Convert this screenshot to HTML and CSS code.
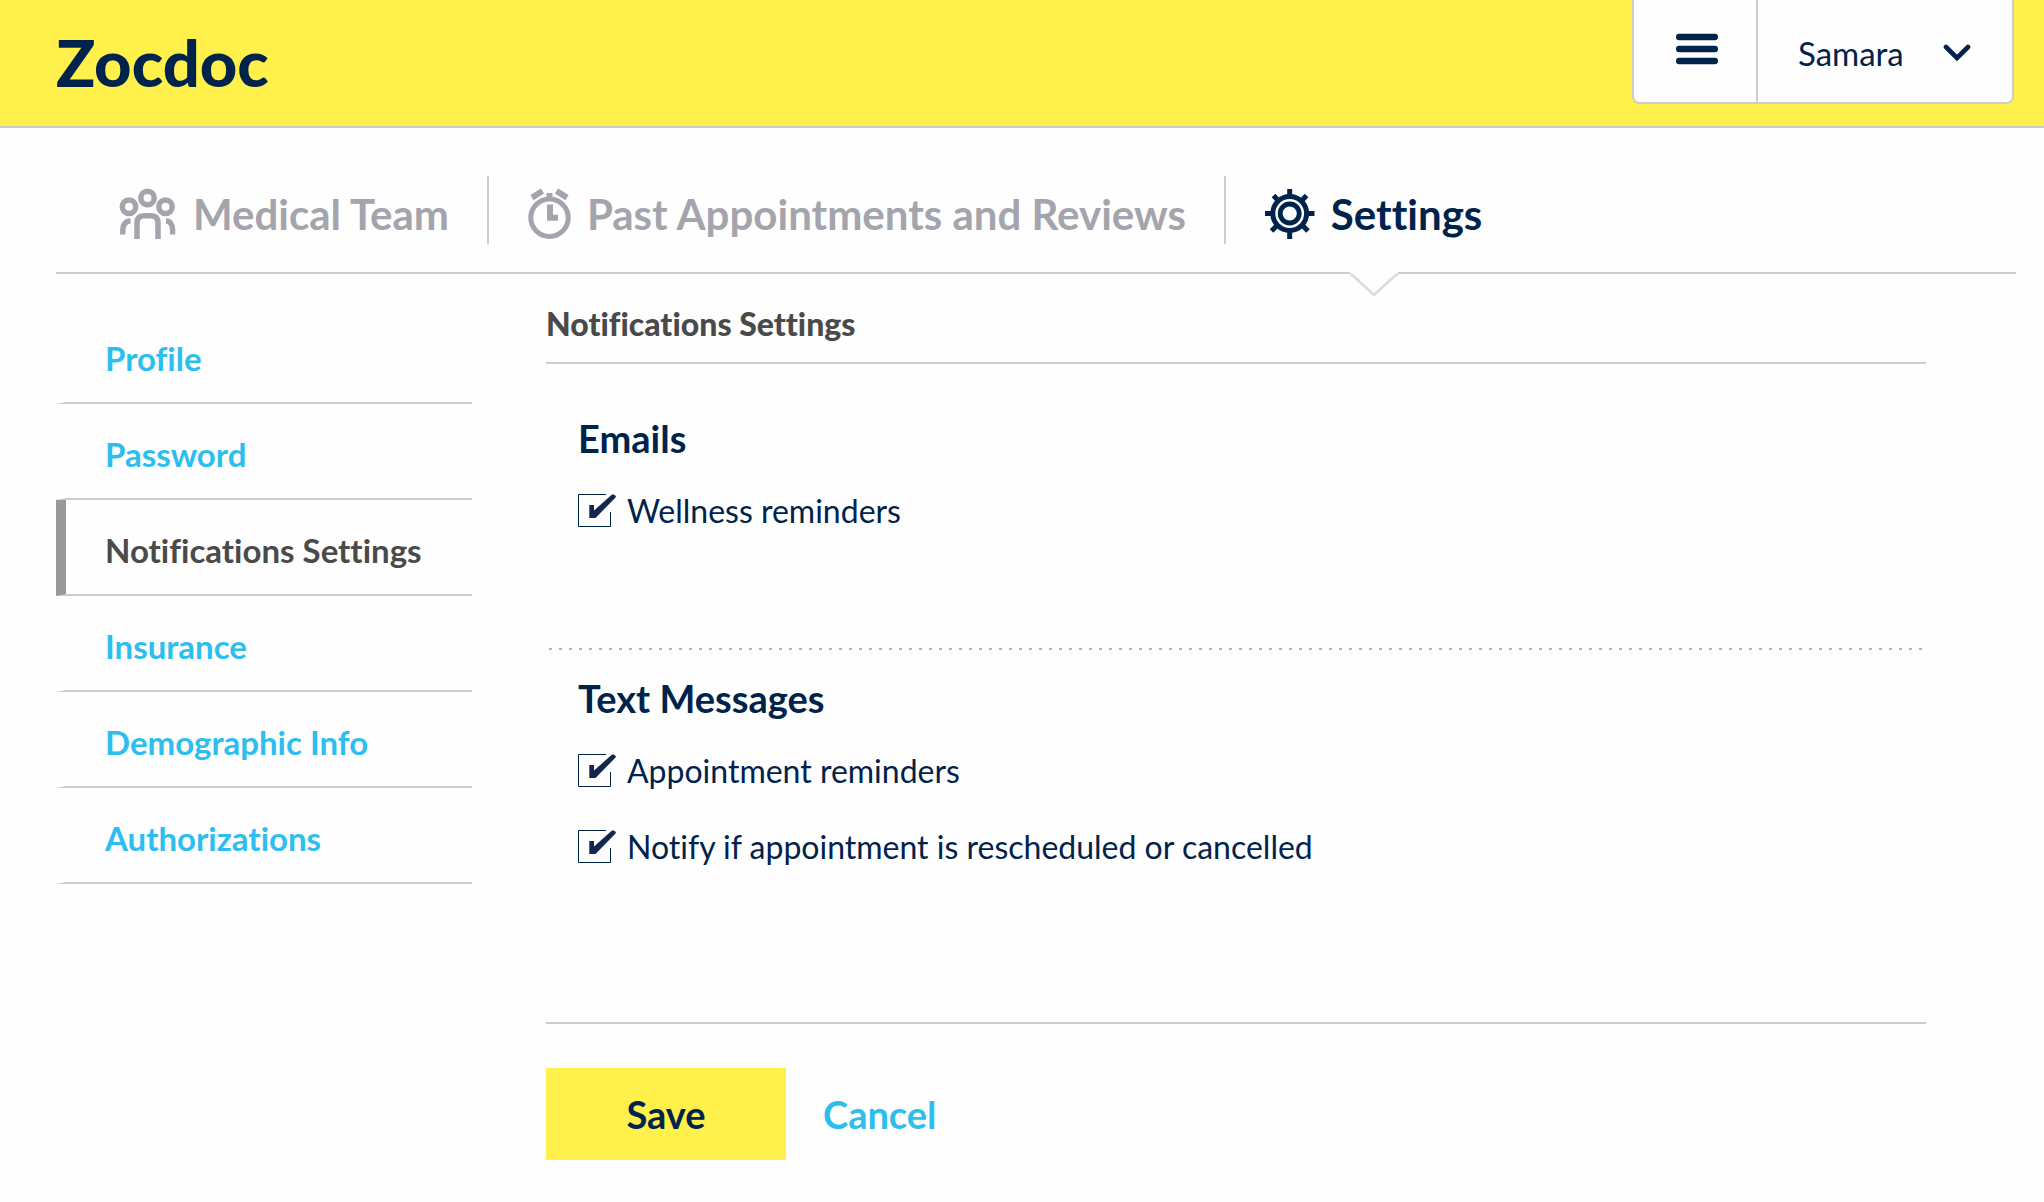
FILE: index.html
```html
<!DOCTYPE html>
<html lang="en">
<head>
<meta charset="utf-8">
<meta name="viewport" content="width=device-width, initial-scale=1">
<title>Notifications Settings - Zocdoc</title>
<link rel="stylesheet" href="styles.css">
</head>
<body>
<header class="site-header">
  <a class="logo" href="#">Zocdoc</a>
  <div class="account">
    <button class="account-button menu-button" type="button" aria-label="Menu">
      <svg width="42" height="32" viewBox="0 0 42 32" aria-hidden="true"><path d="M3.200 4h35.600M3.200 16h35.600M3.200 28h35.600" stroke="currentColor" stroke-width="6.400" stroke-linecap="round"/></svg>
    </button>
    <button class="account-button user-button" type="button">
      <span>Samara</span>
      <svg width="28" height="18" viewBox="0 0 28 18" fill="none" aria-hidden="true"><path d="M3 3l11 11L25 3" stroke="currentColor" stroke-width="4.600" stroke-linecap="round"/></svg>
    </button>
  </div>
</header>
<nav class="tabs" aria-label="Account">
  <ul class="tab-list">
    <li class="tab">
      <a class="tab-link" href="#">
        <svg class="icon-team" width="58" height="52" viewBox="0 0 58 52" fill="none" stroke="currentColor" stroke-width="5.500" aria-hidden="true"><circle cx="28.500" cy="10" r="6.700"/><circle cx="10" cy="18.800" r="6.700"/><circle cx="46.500" cy="18.800" r="6.700"/><path d="M18 51V35Q18 27.700 25 27.700h7Q39 27.700 39 35V51M3.800 46.500V42Q4 33.500 11.500 32.800M53.600 46.500V42Q53.500 33.500 47 32.800"/></svg>
        <span>Medical Team</span>
      </a>
    </li>
    <li class="tab">
      <a class="tab-link" href="#">
        <svg class="icon-clock" width="43" height="52" viewBox="0 0 43 52" fill="none" stroke="currentColor" aria-hidden="true"><circle cx="21.500" cy="29.800" r="18.700" stroke-width="5"/><path d="M22 16.500V29.700h8" stroke-width="6"/><path d="M21.500 5v6" stroke-width="6"/><path d="M4 9.600l10.500-6.600M39 9.600L28.500 3" stroke-width="6"/></svg>
        <span>Past Appointments and Reviews</span>
      </a>
    </li>
    <li class="tab">
      <a class="tab-link tab-current" href="#" aria-current="page">
        <svg class="icon-gear" width="50" height="52" viewBox="0 0 50 52" fill="none" stroke="currentColor" stroke-width="5" aria-hidden="true"><circle cx="24.700" cy="25.500" r="16.900"/><circle cx="24.700" cy="25.500" r="9.500" stroke-width="4.800"/><path d="M24.700 1v8M24.700 43v8M0 25.500h8M41.500 25.500h8M8.500 7.500l5 5.500M41.500 7.500l-5 5.500M6.500 43l6-6M43 43l-6-6"/></svg>
        <span>Settings</span>
        <svg class="tab-pointer" width="48" height="26" viewBox="0 0 48 26" aria-hidden="true"><path d="M0 0h48v3h-3L24 24 3 3H0z" fill="#fefefe"/><path d="M0 2.500q2 0 4 2L24 23 44 4.500q2-2 4-2" fill="none" stroke="#dcdcdc" stroke-width="2.500"/></svg>
      </a>
    </li>
  </ul>
</nav>
<div class="page">
  <nav class="side-nav" aria-label="Settings">
    <ul class="side-list">
      <li><a class="side-link" href="#">Profile</a></li>
      <li><a class="side-link" href="#">Password</a></li>
      <li><a class="side-link side-current" href="#" aria-current="page">Notifications Settings</a></li>
      <li><a class="side-link" href="#">Insurance</a></li>
      <li><a class="side-link" href="#">Demographic Info</a></li>
      <li><a class="side-link" href="#">Authorizations</a></li>
    </ul>
  </nav>
  <main class="content">
    <h1 class="page-title">Notifications Settings</h1>
    <form class="settings-form">
      <fieldset class="group">
        <legend class="group-title">Emails</legend>
        <label class="option">
          <span class="check">
            <input class="check-input" type="checkbox" checked>
            <svg class="check-art" width="38" height="33" viewBox="0 0 38 33" aria-hidden="true"><path d="M28 .5H.5v32h32V18" fill="none" stroke="#00234b"/><path class="check-mark" d="M11.300 11H16v5.500L34 .6Q37.500-.2 38 3L17.500 24h-6.200z"/></svg>
          </span>
          <span>Wellness reminders</span>
        </label>
      </fieldset>
      <div class="dots"></div>
      <fieldset class="group group-last">
        <legend class="group-title">Text Messages</legend>
        <label class="option">
          <span class="check">
            <input class="check-input" type="checkbox" checked>
            <svg class="check-art" width="38" height="33" viewBox="0 0 38 33" aria-hidden="true"><path d="M28 .5H.5v32h32V18" fill="none" stroke="#00234b"/><path class="check-mark" d="M11.300 11H16v5.500L34 .6Q37.500-.2 38 3L17.500 24h-6.200z"/></svg>
          </span>
          <span>Appointment reminders</span>
        </label>
        <label class="option">
          <span class="check">
            <input class="check-input" type="checkbox" checked>
            <svg class="check-art" width="38" height="33" viewBox="0 0 38 33" aria-hidden="true"><path d="M28 .5H.5v32h32V18" fill="none" stroke="#00234b"/><path class="check-mark" d="M11.300 11H16v5.500L34 .6Q37.500-.2 38 3L17.500 24h-6.200z"/></svg>
          </span>
          <span>Notify if appointment is rescheduled or cancelled</span>
        </label>
      </fieldset>
      <div class="actions">
        <button class="save" type="submit">Save</button>
        <a class="cancel" href="#">Cancel</a>
      </div>
    </form>
  </main>
</div>
</body>
</html>
```

FILE: styles.css
```css
* { box-sizing: border-box; }

body {
  margin: 0;
  background: #fefefe;
  color: #00234b;
  font-family: Lato, "Liberation Sans", sans-serif;
  font-size: 32px;
  line-height: 40px;
  font-variant-ligatures: none;
}

a { color: inherit; text-decoration: none; }
ul { margin: 0; padding: 0; list-style: none; }
button { margin: 0; border: 0; font: inherit; color: inherit; cursor: pointer; }
svg { display: block; flex: none; }

/* Header */
.site-header {
  display: flex;
  justify-content: space-between;
  align-items: flex-start;
  min-height: 128px;
  padding: 0 30px 0 56px;
  background: #fff04b;
  border-bottom: 2px solid #ccc;
}
.logo {
  padding-top: 22px;
  font-size: 65px;
  line-height: 80px;
  font-weight: 900;
}
.account {
  display: flex;
  height: 104px;
  border: 2px solid #ccc;
  border-top: 0;
  border-radius: 0 0 8px 8px;
  background: #fefefe;
  overflow: hidden;
}
.account-button {
  display: flex;
  align-items: center;
  background: #fefefe;
}
.menu-button {
  padding: 0 38px 4px 42px;
  border-right: 2px solid #ccc;
}
.user-button {
  justify-content: space-between;
  min-width: 254px;
  padding: 4px 41px 0 40px;
  font-size: 33px;
}

/* Tabs */
.tabs {
  margin: 0 28px 0 56px;
  padding: 48px 0 28px 24px;
  border-bottom: 2px solid #ccc;
}
.tab-list { display: flex; }
.tab {
  padding: 0 38px 0 39px;
  border-right: 2px solid #ccc;
}
.tab:last-child { border-right: 0; }
.tab-link {
  position: relative;
  display: flex;
  align-items: center;
  gap: 16px;
  height: 68px;
  padding-top: 7px;
  color: #a4a4ad;
  font-size: 42px;
  font-weight: 700;
  white-space: nowrap;
}
.tab-current { color: #00234b; }
.tab-pointer {
  position: absolute;
  top: 96px;
  left: 50%;
  margin-left: -24px;
}

/* Page body */
.page {
  display: grid;
  grid-template-columns: 416px 1fr;
  column-gap: 74px;
  padding: 30px 118px 42px 56px;
}
.side-nav { padding-top: 4px; }
.side-link {
  display: block;
  height: 96px;
  padding: 30px 0 0 39px;
  border-left: 10px solid transparent;
  border-bottom: 2px solid #ccc;
  color: #2dbeef;
  font-size: 33px;
  font-weight: 700;
}
.side-current {
  border-left-color: #999;
  color: #4a4a4a;
}
.page-title {
  margin: 0;
  padding-bottom: 18px;
  border-bottom: 2px solid #ccc;
  font-size: 32px;
  line-height: 40px;
  font-weight: 900;
  color: #4a4a4a;
}
.group {
  margin: 50px 0 0;
  padding: 29px 32px 81px;
  border: 0;
  min-width: 0;
}
.group-last {
  margin-top: 24px;
  padding-bottom: 119px;
}
.group-title {
  padding: 0;
  font-size: 38px;
  line-height: 48px;
  font-weight: 700;
}
.option {
  display: flex;
  align-items: center;
  gap: 11px;
  width: fit-content;
  margin-bottom: 36px;
}
.check { display: grid; }
.check-input,
.check-art { grid-area: 1 / 1; }
.check-input {
  appearance: none;
  width: 34px;
  height: 34px;
  margin: 0;
}
.check-art { pointer-events: none; }
.check-mark { fill: #14264b; visibility: hidden; }
.check-input:checked + .check-art .check-mark { visibility: visible; }

.dots {
  height: 2px;
  margin: 0 3px;
  background: repeating-linear-gradient(90deg, #b4b4b4 0 3px, transparent 3px 10px);
}
.actions {
  display: flex;
  align-items: center;
  gap: 37px;
  padding-top: 44px;
  border-top: 2px solid #ccc;
  font-size: 38px;
  font-weight: 700;
}
.save {
  width: 240px;
  height: 92px;
  background: #fff04b;
}
.cancel { color: #2dbeef; }
```
